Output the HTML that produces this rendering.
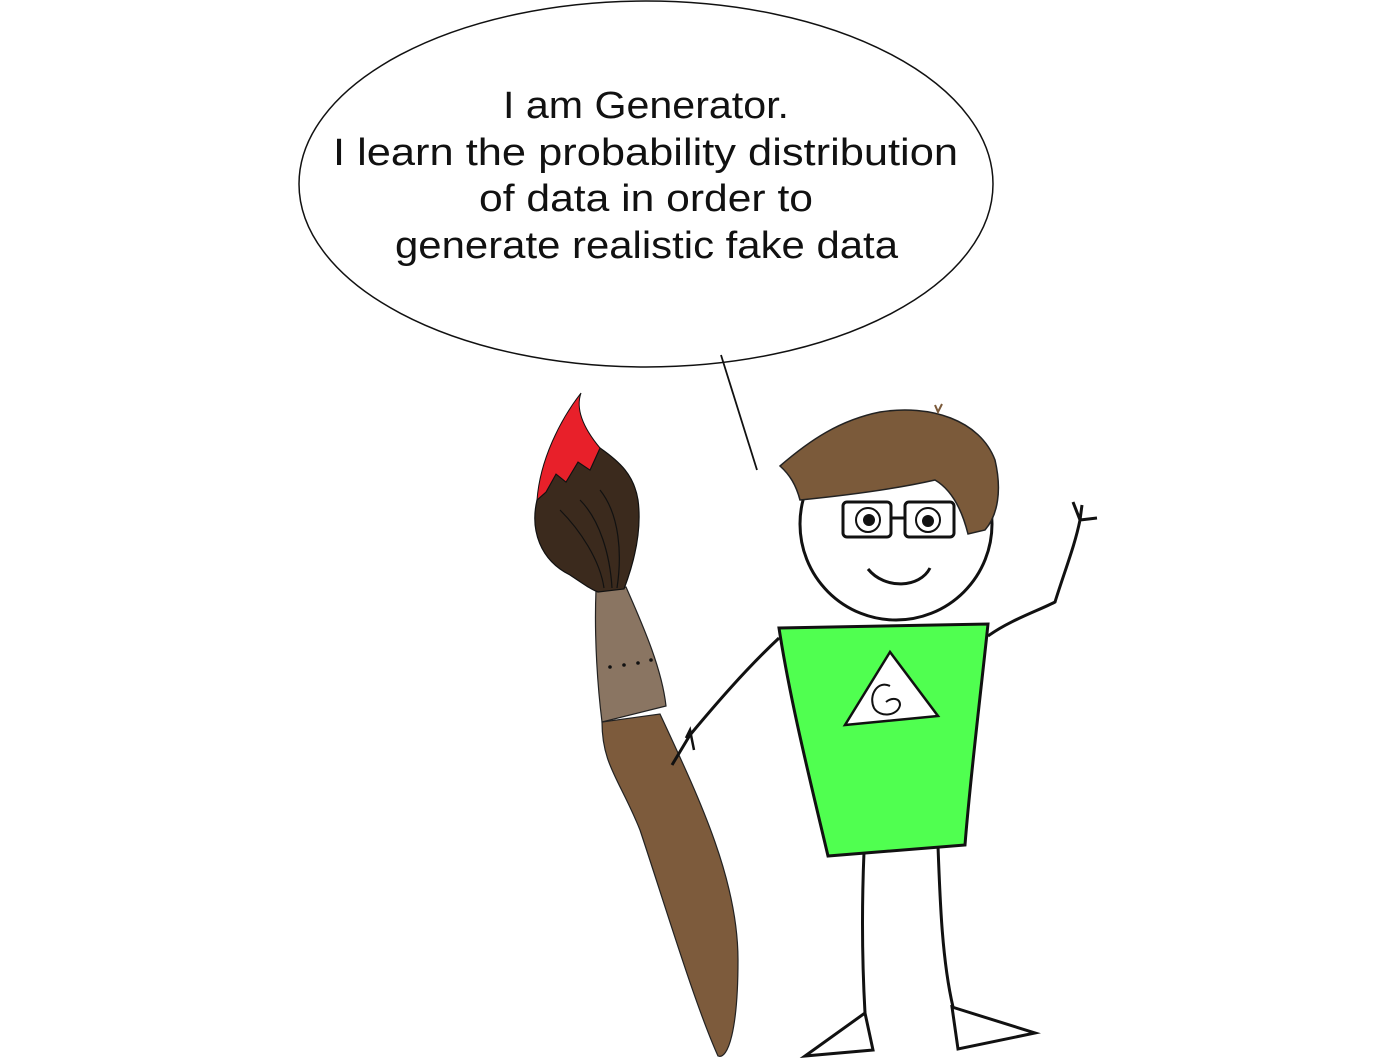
<!DOCTYPE html>
<html><head><meta charset="utf-8"><style>
html,body{margin:0;padding:0;background:#fff;}
svg{display:block;}
</style></head><body>
<svg width="1400" height="1061" viewBox="0 0 1400 1061" xmlns="http://www.w3.org/2000/svg">
<!-- speech bubble -->
<ellipse cx="646" cy="184" rx="347" ry="183" fill="#fff" stroke="#111" stroke-width="1.5"/>
<line x1="721" y1="355" x2="757" y2="470" stroke="#111" stroke-width="1.8"/>
<g font-family="'Liberation Sans', sans-serif" font-size="38" fill="#111">
<text x="503" y="118" textLength="286" lengthAdjust="spacingAndGlyphs">I am Generator.</text>
<text x="333" y="165" textLength="625" lengthAdjust="spacingAndGlyphs">I learn the probability distribution</text>
<text x="479" y="211" textLength="334" lengthAdjust="spacingAndGlyphs">of data in order to</text>
<text x="395" y="258" textLength="503" lengthAdjust="spacingAndGlyphs">generate realistic fake data</text>
</g>

<!-- brush handle -->
<path d="M602 722 L660 714 C700 800 738 880 738 960 C738 1030 728 1060 718 1056 C695 1005 665 905 640 830 C620 780 602 765 602 722 Z" fill="#7d5b3c" stroke="#222" stroke-width="1.2"/>
<!-- ferrule -->
<path d="M596 590 L626 587 C645 630 662 670 666 706 L602 722 C598 690 594 640 596 590 Z" fill="#8a7562" stroke="#222" stroke-width="1.2"/>
<g fill="#111"><circle cx="610" cy="667" r="1.8"/><circle cx="624" cy="665" r="1.8"/><circle cx="638" cy="663" r="1.8"/><circle cx="651" cy="660" r="1.8"/></g>
<!-- brush head dark -->
<path d="M537 500 C530 530 540 560 570 575 C585 585 592 590 598 592 L624 589 C635 560 642 530 638 500 C634 475 620 462 600 448 L590 470 L578 462 L566 482 L556 474 L546 492 Z" fill="#3b2a1d" stroke="#111" stroke-width="1.2"/>
<path d="M560 510 C580 530 600 560 604 588 M580 500 C600 520 610 555 612 588 M600 490 C620 515 622 555 617 588" fill="none" stroke="#111" stroke-width="1.2"/>
<!-- red tip -->
<path d="M581 393 C560 420 540 460 537 500 L546 492 L556 474 L566 482 L578 462 L590 470 L600 448 C585 430 575 410 581 393 Z" fill="#e8202a" stroke="#111" stroke-width="1"/>

<!-- left arm -->
<path d="M779 638 C745 670 715 705 690 735 L672 765" fill="none" stroke="#111" stroke-width="3"/>
<path d="M686 738 L690 730 L694 750" fill="none" stroke="#111" stroke-width="2.5"/>
<!-- right arm -->
<path d="M988 636 C1010 620 1040 610 1055 602 C1065 570 1075 545 1080 520 L1073 502 M1080 520 L1097 518 M1080 520 L1082 505" fill="none" stroke="#111" stroke-width="3"/>

<!-- legs -->
<path d="M864 852 C862 900 862 960 865 1013" fill="none" stroke="#111" stroke-width="3"/>
<path d="M938 846 C940 900 942 960 953 1007" fill="none" stroke="#111" stroke-width="3"/>
<path d="M865 1013 L805 1056 L873 1050 Z" fill="#fff" stroke="#111" stroke-width="3"/>
<path d="M952 1007 L1035 1033 L958 1049 Z" fill="#fff" stroke="#111" stroke-width="3"/>

<!-- shirt -->
<path d="M779 628 L988 624 C980 700 970 780 965 845 L828 856 C810 780 790 700 779 628 Z" fill="#50ff50" stroke="#111" stroke-width="3"/>
<path d="M890 652 L845 725 L938 716 Z" fill="#fff" stroke="#111" stroke-width="2.5"/>
<path d="M890 686 C878 680 868 695 874 708 C880 718 898 716 900 705 C900 698 892 697 886 702" fill="none" stroke="#111" stroke-width="2"/>

<!-- head -->
<circle cx="896" cy="524" r="96" fill="#fff" stroke="#111" stroke-width="3"/>
<!-- hair -->
<path d="M780 466 C810 440 840 420 880 412 C930 404 980 420 995 460 C1002 490 998 515 985 530 L968 534 C962 510 952 490 935 480 C900 488 850 495 800 500 C796 485 790 475 780 466 Z" fill="#7b5a3a" stroke="#222" stroke-width="1.5"/>
<path d="M935 405 L938 412 L942 404" fill="none" stroke="#7b5a3a" stroke-width="2"/>
<!-- glasses -->
<rect x="843" y="502" width="48" height="35" rx="4" fill="#fff" stroke="#111" stroke-width="3"/>
<rect x="905" y="502" width="49" height="35" rx="4" fill="#fff" stroke="#111" stroke-width="3"/>
<line x1="891" y1="518" x2="905" y2="518" stroke="#111" stroke-width="3"/>
<circle cx="868" cy="520" r="12" fill="#fff" stroke="#111" stroke-width="2"/>
<circle cx="928" cy="520" r="12" fill="#fff" stroke="#111" stroke-width="2"/>
<circle cx="869" cy="520" r="6" fill="#111"/>
<circle cx="928" cy="521" r="6" fill="#111"/>
<!-- smile -->
<path d="M868 569 C885 590 920 588 930 568" fill="none" stroke="#111" stroke-width="3"/>
</svg>
</body></html>
